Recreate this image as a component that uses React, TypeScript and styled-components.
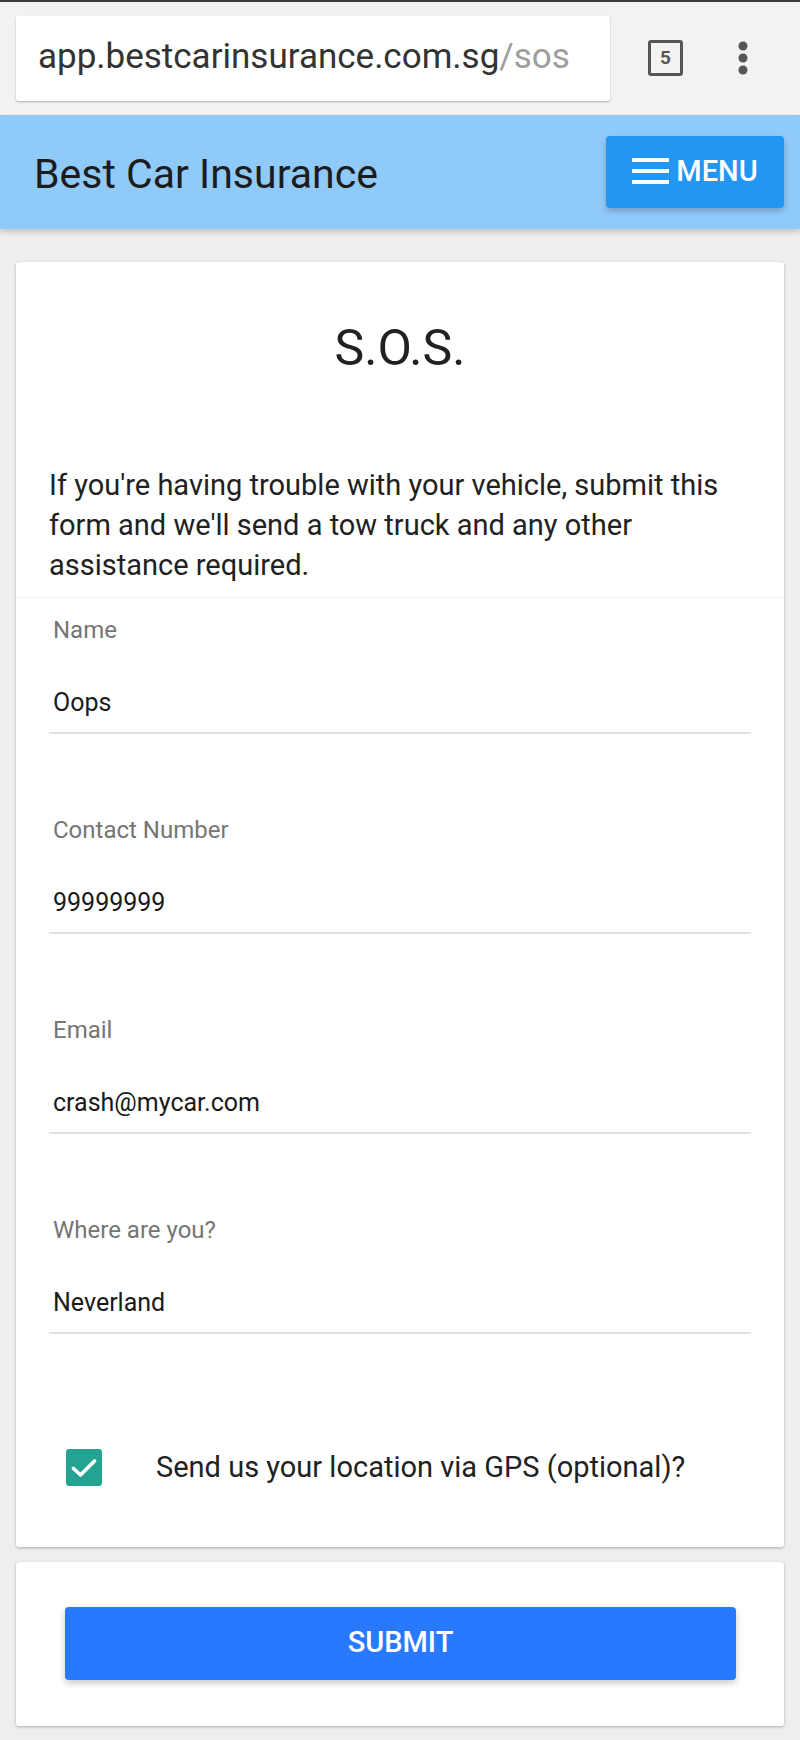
import React from "react";
import styled, { createGlobalStyle } from "styled-components";

const GlobalStyle = createGlobalStyle`
  * { box-sizing: border-box; }
  html, body { margin: 0; padding: 0; }
  body {
    background: #eeeeee;
    font-family: Roboto, "Noto Sans", Arial, sans-serif;
    color: #212121;
  }
`;

const Page = styled.div`
  width: 800px;
  min-height: 1740px;
  background: #eeeeee;
`;

const BrowserBar = styled.div`
  height: 115px;
  background: #f2f2f2;
  border-top: 2px solid #3a3a3a;
  display: flex;
  align-items: flex-start;
  padding: 14px 0 0 16px;
`;

const UrlBox = styled.div`
  width: 594px;
  height: 85px;
  background: #ffffff;
  border-radius: 2px;
  box-shadow: 0 1px 2px rgba(0, 0, 0, 0.28);
  display: flex;
  align-items: center;
  padding: 0 0 4px 22px;
  font-size: 35px;
  color: #333333;
  white-space: nowrap;
  overflow: hidden;
`;

const UrlPath = styled.span`
  color: #9e9e9e;
`;

const BarIcons = styled.div`
  display: flex;
  align-items: center;
  height: 84px;
  margin-left: 38px;
  gap: 54px;
`;

const TabCount = styled.div`
  width: 35px;
  height: 36px;
  border: 3px solid #555555;
  border-radius: 3px;
  display: flex;
  align-items: center;
  justify-content: center;
  font-size: 19px;
  font-weight: 700;
  color: #555555;
  line-height: 1;
  margin-top: -1px;
`;

const Header = styled.header`
  height: 114px;
  background: #90caf9;
  display: flex;
  align-items: center;
  justify-content: space-between;
  padding: 0 16px 0 34px;
  box-shadow: 0 3px 5px rgba(0, 0, 0, 0.18);
  position: relative;
`;

const Brand = styled.h1`
  margin: 0;
  font-size: 41px;
  font-weight: 400;
  color: #1c1c1c;
  line-height: 1;
  padding-top: 4px;
`;

const MenuButton = styled.button`
  width: 178px;
  height: 72px;
  border: none;
  border-radius: 4px;
  background: #2196f3;
  color: #ffffff;
  display: flex;
  align-items: center;
  justify-content: center;
  gap: 7px;
  font-family: Roboto, Arial, sans-serif;
  font-size: 29px;
  font-weight: 500;
  box-shadow: 0 3px 6px rgba(0, 0, 0, 0.22);
  padding: 0 0 2px 0;
`;

const Main = styled.main`
  padding: 33px 16px 15px;
  display: flex;
  flex-direction: column;
  gap: 15px;
`;

const Card = styled.section`
  background: #ffffff;
  border-radius: 3px;
  box-shadow: 0 1px 3px rgba(0, 0, 0, 0.28);
`;

const Intro = styled.div`
  padding: 58px 33px 12px;
`;

const Title = styled.h2`
  margin: 0 0 89px;
  text-align: center;
  font-size: 50px;
  font-weight: 400;
  line-height: 56px;
  color: #212121;
`;

const Lead = styled.p`
  margin: 0;
  font-size: 29px;
  line-height: 40px;
  color: #212121;
`;

const Form = styled.div`
  border-top: 1px solid #f1f1f1;
  padding: 18px 33px 61px;
`;

const Field = styled.div`
  display: flex;
  flex-direction: column;
  & + & {
    margin-top: 82px;
  }
`;

const Label = styled.label`
  font-size: 24px;
  line-height: 28px;
  color: #757575;
  padding-left: 4px;
  margin-bottom: 33px;
`;

const Input = styled.input`
  height: 57px;
  border: none;
  border-bottom: 2px solid #e0e0e0;
  outline: none;
  background: transparent;
  padding: 0 4px 4px;
  font-family: Roboto, Arial, sans-serif;
  font-size: 25px;
  color: #1a1a1a;
`;

const CheckRow = styled.label`
  margin-top: 115px;
  display: flex;
  align-items: center;
  padding-left: 17px;
  gap: 54px;
  font-size: 29px;
  line-height: 37px;
  color: #212121;
`;

const CheckBox = styled.span<{ $checked: boolean }>`
  width: 36px;
  height: 37px;
  border-radius: 3px;
  background: ${(p) => (p.$checked ? "#25a392" : "#ffffff")};
  display: flex;
  align-items: center;
  justify-content: center;
  flex: none;
`;

const SubmitCard = styled(Card)`
  padding: 45px 48px 46px 49px;
`;

const SubmitButton = styled.button`
  width: 100%;
  height: 73px;
  border: none;
  border-radius: 4px;
  background: #2979ff;
  color: #ffffff;
  font-family: Roboto, Arial, sans-serif;
  font-size: 29px;
  font-weight: 500;
  padding: 0 0 3px;
  box-shadow: 0 3px 7px rgba(0, 0, 0, 0.22);
`;

const fields = [
  { label: "Name", value: "Oops" },
  { label: "Contact Number", value: "99999999" },
  { label: "Email", value: "crash@mycar.com" },
  { label: "Where are you?", value: "Neverland" },
];

export default function App() {
  return (
    <Page>
      <GlobalStyle />
      <BrowserBar>
        <UrlBox>
          app.bestcarinsurance.com.sg<UrlPath>/sos</UrlPath>
        </UrlBox>
        <BarIcons>
          <TabCount>5</TabCount>
          <svg width="12" height="36" viewBox="0 0 12 36" aria-hidden="true">
            <circle cx="6" cy="6" r="4.5" fill="#555555" />
            <circle cx="6" cy="18" r="4.5" fill="#555555" />
            <circle cx="6" cy="30" r="4.5" fill="#555555" />
          </svg>
        </BarIcons>
      </BrowserBar>
      <Header>
        <Brand>Best Car Insurance</Brand>
        <MenuButton>
          <svg width="37" height="26" viewBox="0 0 37 26" aria-hidden="true">
            <rect x="0" y="0" width="37" height="4" fill="#ffffff" />
            <rect x="0" y="11" width="37" height="4" fill="#ffffff" />
            <rect x="0" y="22" width="37" height="4" fill="#ffffff" />
          </svg>
          MENU
        </MenuButton>
      </Header>
      <Main>
        <Card>
          <Intro>
            <Title>S.O.S.</Title>
            <Lead>
              If you're having trouble with your vehicle, submit this form and
              we'll send a tow truck and any other assistance required.
            </Lead>
          </Intro>
          <Form>
            {fields.map((f) => (
              <Field key={f.label}>
                <Label>{f.label}</Label>
                <Input readOnly value={f.value} />
              </Field>
            ))}
            <CheckRow>
              <CheckBox $checked>
                <svg width="26" height="20" viewBox="0 0 26 20" aria-hidden="true">
                  <path
                    d="M2.5 10.5 L9.5 17 L23.5 3"
                    fill="none"
                    stroke="#ffffff"
                    strokeWidth="3.6"
                    strokeLinecap="round"
                    strokeLinejoin="round"
                  />
                </svg>
              </CheckBox>
              Send us your location via GPS (optional)?
            </CheckRow>
          </Form>
        </Card>
        <SubmitCard>
          <SubmitButton>SUBMIT</SubmitButton>
        </SubmitCard>
      </Main>
    </Page>
  );
}
